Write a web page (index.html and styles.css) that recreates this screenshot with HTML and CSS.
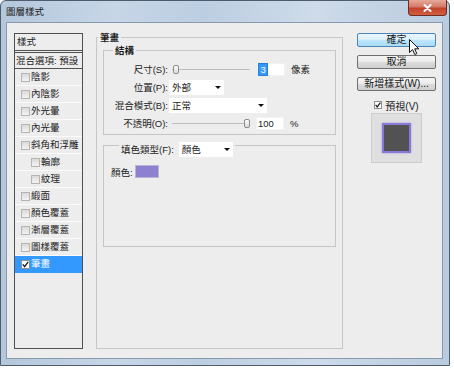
FILE: index.html
```html
<!DOCTYPE html>
<html lang="zh-Hant">
<head>
  <meta charset="UTF-8">
  <meta name="viewport" content="width=device-width, initial-scale=1.0">
  <title>圖層樣式</title>
  <link rel="stylesheet" href="styles.css">
</head>
<body>
  <div class="window">
    <div class="titlebar">
      <span class="title">圖層樣式</span>
      <span class="close">
        <svg width="9" height="8" viewBox="0 0 9 8"><path d="M1.5 1 L7.5 7 M7.5 1 L1.5 7" stroke="#fff" stroke-width="2" stroke-linecap="round"/></svg>
      </span>
    </div>
    <div class="client">
      <div class="styles-list">
        <div class="list-head">樣式</div>
        <div class="list-blend">混合選項: 預設</div>
        <div class="item"><span class="cb"></span>陰影</div>
        <div class="item"><span class="cb"></span>內陰影</div>
        <div class="item"><span class="cb"></span>外光暈</div>
        <div class="item"><span class="cb"></span>內光暈</div>
        <div class="item"><span class="cb"></span>斜角和浮雕</div>
        <div class="item sub"><span class="cb"></span>輪廓</div>
        <div class="item sub"><span class="cb"></span>紋理</div>
        <div class="item"><span class="cb"></span>緞面</div>
        <div class="item"><span class="cb"></span>顏色覆蓋</div>
        <div class="item"><span class="cb"></span>漸層覆蓋</div>
        <div class="item"><span class="cb"></span>圖樣覆蓋</div>
        <div class="item active"><span class="cb checked"><svg width="9" height="9" viewBox="0 0 9 9"><path d="M1.8 4.4 L3.6 6.6 L7.2 1.8" fill="none" stroke="#1b1b1b" stroke-width="1.4"/></svg></span>筆畫</div>
      </div>

      <div class="panel">
        <div class="group outer">
          <div class="group-title">筆畫</div>
          <div class="group inner">
            <div class="group-title">結構</div>
            <div class="rows">
              <div class="row">
                <label>尺寸(S):</label>
                <div class="slider"><span class="thumb"></span></div>
                <span class="field size"><span class="picked">3</span></span>
                <span class="unit">像素</span>
              </div>
              <div class="row">
                <label>位置(P):</label>
                <span class="select w-pos">外部<i class="arrow"></i></span>
              </div>
              <div class="row">
                <label>混合模式(B):</label>
                <span class="select w-blend">正常<i class="arrow"></i></span>
              </div>
              <div class="row">
                <label>不透明(O):</label>
                <div class="slider end"><span class="thumb"></span></div>
                <span class="field opacity">100</span>
                <span class="unit">%</span>
              </div>
            </div>
          </div>
          <div class="group fill">
            <div class="group-title fill-title">
              <label>填色類型(F):</label>
              <span class="select w-fill">顏色<i class="arrow"></i></span>
            </div>
            <div class="color-row">顏色: <span class="swatch"></span></div>
          </div>
        </div>
      </div>

      <div class="actions">
        <button class="btn default">確定</button>
        <button class="btn">取消</button>
        <button class="btn">新增樣式(W)...</button>
        <div class="preview-toggle">
          <span class="cb checked white"><svg width="8" height="8" viewBox="0 0 9 9"><path d="M1.8 4.4 L3.6 6.6 L7.2 1.8" fill="none" stroke="#1b1b1b" stroke-width="1.4"/></svg></span>預視(V)
        </div>
        <div class="preview"><span class="preview-swatch"></span></div>
      </div>
    </div>
    <svg class="cursor" width="12" height="17" viewBox="0 0 12 17">
      <path d="M0.5 0.5 L0.5 13.5 L3.6 10.6 L5.8 15.6 L7.8 14.7 L5.7 9.8 L9.8 9.8 Z" fill="#fff" stroke="#111" stroke-width="1"/>
    </svg>
  </div>
</body>
</html>
```

FILE: styles.css
```css
body {
  margin: 0;
  background: #fff;
  font-family: "Liberation Sans", "Noto Sans CJK TC", sans-serif;
  font-size: 9.5px;
  color: #1c1c1c;
}

.window {
  position: relative;
  width: 450px;
  height: 366px;
  box-sizing: border-box;
  border: 1px solid #4e5d6e;
  border-radius: 6px 6px 0 0;
  padding: 0 6px 6px 5px;
  display: flex;
  flex-direction: column;
  background: linear-gradient(to right, #b4c7db 0%, #c6d6e7 25%, #bccee1 45%, #cddbea 70%, #b9cbde 100%);
}

.titlebar {
  height: 21px;
  display: flex;
  justify-content: space-between;
  align-items: flex-start;
}
.title {
  margin-top: 5px;
  line-height: 12px;
  color: #222;
}
.close {
  width: 39px;
  height: 16px;
  box-sizing: border-box;
  margin: -1px -4px 0 0;
  border: 1px solid #6e2c22;
  border-top: none;
  border-radius: 0 0 4px 4px;
  background: linear-gradient(#e8a898 0%, #d47a66 45%, #c2412c 55%, #d3603f 100%);
  display: flex;
  align-items: center;
  justify-content: center;
}

.client {
  flex: 1;
  display: flex;
  align-items: flex-start;
  border: 1px solid #8a9aae;
  background: #ededed;
}

/* left list */
.styles-list {
  margin: 10px 0 0 7px;
  width: 69px;
  height: 316px;
  box-sizing: border-box;
  border: 1px solid #505050;
  line-height: 14px;
}
.list-head {
  height: 16px;
  padding-left: 2px;
  border-bottom: 1px solid #505050;
  display: flex;
  align-items: center;
}
.list-blend {
  margin-top: 1px;
  height: 15px;
  padding-left: 1px;
  border-top: 1px solid #505050;
  border-bottom: 1px solid #505050;
  display: flex;
  align-items: center;
  white-space: nowrap;
}
.item {
  height: 16px;
  border-bottom: 1px solid #fbfbfb;
  padding-left: 6px;
  display: flex;
  align-items: center;
  gap: 1px;
  white-space: nowrap;
}
.item.sub {
  padding-left: 16px;
}
.item.active {
  background: #3399ff;
  color: #fff;
  border-bottom-color: #3399ff;
}

.cb {
  width: 9px;
  height: 9px;
  box-sizing: border-box;
  border: 1px solid #b4b4b4;
  background: linear-gradient(#dadada, #f3f3f3);
  display: flex;
  flex-shrink: 0;
}
.cb.checked {
  background: #fff;
  border-color: #8e8f8f;
}
.cb svg {
  margin: -1px;
}

/* middle panel */
.panel {
  margin: 14px 0 0 13px;
}
.group {
  border: 1px solid #c6c6c6;
  box-sizing: border-box;
}
.group-title {
  width: fit-content;
  background: #ededed;
  line-height: 13px;
  margin-top: -7px;
  padding: 0 2px;
  font-weight: bold;
}
.outer {
  width: 247px;
  height: 312px;
  padding: 0 6px;
}
.outer > .group-title {
  margin-left: -5px;
}
.inner {
  margin-top: 6px;
  height: 85px;
}
.inner > .group-title {
  margin-left: 9px;
}

.rows {
  padding-top: 4px;
  display: flex;
  flex-direction: column;
  gap: 2px;
}
.row {
  height: 16px;
  display: flex;
  align-items: center;
}
.row label {
  width: 64px;
  text-align: right;
  white-space: nowrap;
}

.slider {
  width: 78px;
  height: 10px;
  margin-left: 4px;
  display: flex;
  align-items: center;
  background: linear-gradient(#bdbdbd, #bdbdbd) center / 100% 1px no-repeat;
}
.slider.end {
  justify-content: flex-end;
}
.thumb {
  width: 6px;
  height: 9px;
  box-sizing: border-box;
  border: 1px solid #8c8c8c;
  border-radius: 2px;
  background: linear-gradient(#fdfdfd, #dcdcdc);
  margin-left: 1px;
}

.field {
  width: 28px;
  height: 13px;
  box-sizing: border-box;
  background: #fff;
  border: 1px solid #f2f2f2;
  padding-left: 1px;
  display: flex;
  align-items: center;
  line-height: 11px;
}
.field.size {
  margin-left: 7px;
}
.field.opacity {
  margin-left: 6px;
}
.picked {
  background: #3399ff;
  color: #fff;
  padding: 0 1.5px;
  outline: 1px solid #2a7fd4;
}
.unit {
  margin-left: 6px;
}

.select {
  height: 15px;
  box-sizing: border-box;
  margin-left: 1px;
  padding: 0 3px 0 3px;
  background: #fff;
  display: flex;
  align-items: center;
  justify-content: space-between;
  font-weight: normal;
}
.w-pos {
  width: 55px;
}
.w-blend {
  width: 98px;
}
.w-fill {
  width: 54px;
}
.arrow {
  width: 0;
  height: 0;
  border-top: 3px solid #111;
  border-left: 3px solid transparent;
  border-right: 3px solid transparent;
}

.fill {
  margin-top: 10px;
  height: 102px;
}
.fill-title {
  margin: -4px 0 0 15px;
  display: flex;
  align-items: center;
  gap: 5px;
  line-height: 15px;
  font-weight: normal;
}
.fill-title .select {
  margin-left: 0;
}
.color-row {
  margin: 8px 0 0 7px;
  height: 13px;
  display: flex;
  align-items: center;
  gap: 2px;
}
.swatch {
  width: 24px;
  height: 13px;
  box-sizing: border-box;
  border: 1px solid #b9b3d6;
  background: #8e80d0;
}

/* right column */
.actions {
  margin: 10px 0 0 14px;
  width: 79px;
  display: flex;
  flex-direction: column;
}
.btn {
  height: 14px;
  margin-bottom: 8px;
  padding: 0;
  border: 1px solid #707070;
  border-radius: 2px;
  background: linear-gradient(#f4f4f4 0%, #ebebeb 50%, #dcdcdc 50%, #cfcfcf 100%);
  font-family: inherit;
  font-size: 10px;
  line-height: 12px;
  color: #151515;
}
.btn.default {
  border-color: #4a87b8;
  background: linear-gradient(#eaf6fd 0%, #d9f0fc 50%, #bee6fd 50%, #a9dbf6 100%);
}
.btn:nth-child(3) {
  margin-bottom: 0;
}
.preview-toggle {
  margin-top: 8px;
  height: 12px;
  display: flex;
  align-items: center;
  justify-content: center;
  gap: 3px;
  font-size: 10px;
}
.preview-toggle .cb {
  width: 8px;
  height: 8px;
}
.preview {
  margin-top: 2px;
  align-self: center;
  width: 51px;
  height: 50px;
  box-sizing: border-box;
  border: 1px solid #cdcdcd;
  background: #dfdfdf;
  display: flex;
  align-items: center;
  justify-content: center;
}
.preview-swatch {
  width: 29px;
  height: 30px;
  box-sizing: border-box;
  border: 2px solid #8a78d8;
  background: #525252;
  box-shadow: 0 0 2px #a999ea;
}

.cursor {
  position: absolute;
  left: 408px;
  top: 38px;
}
```
